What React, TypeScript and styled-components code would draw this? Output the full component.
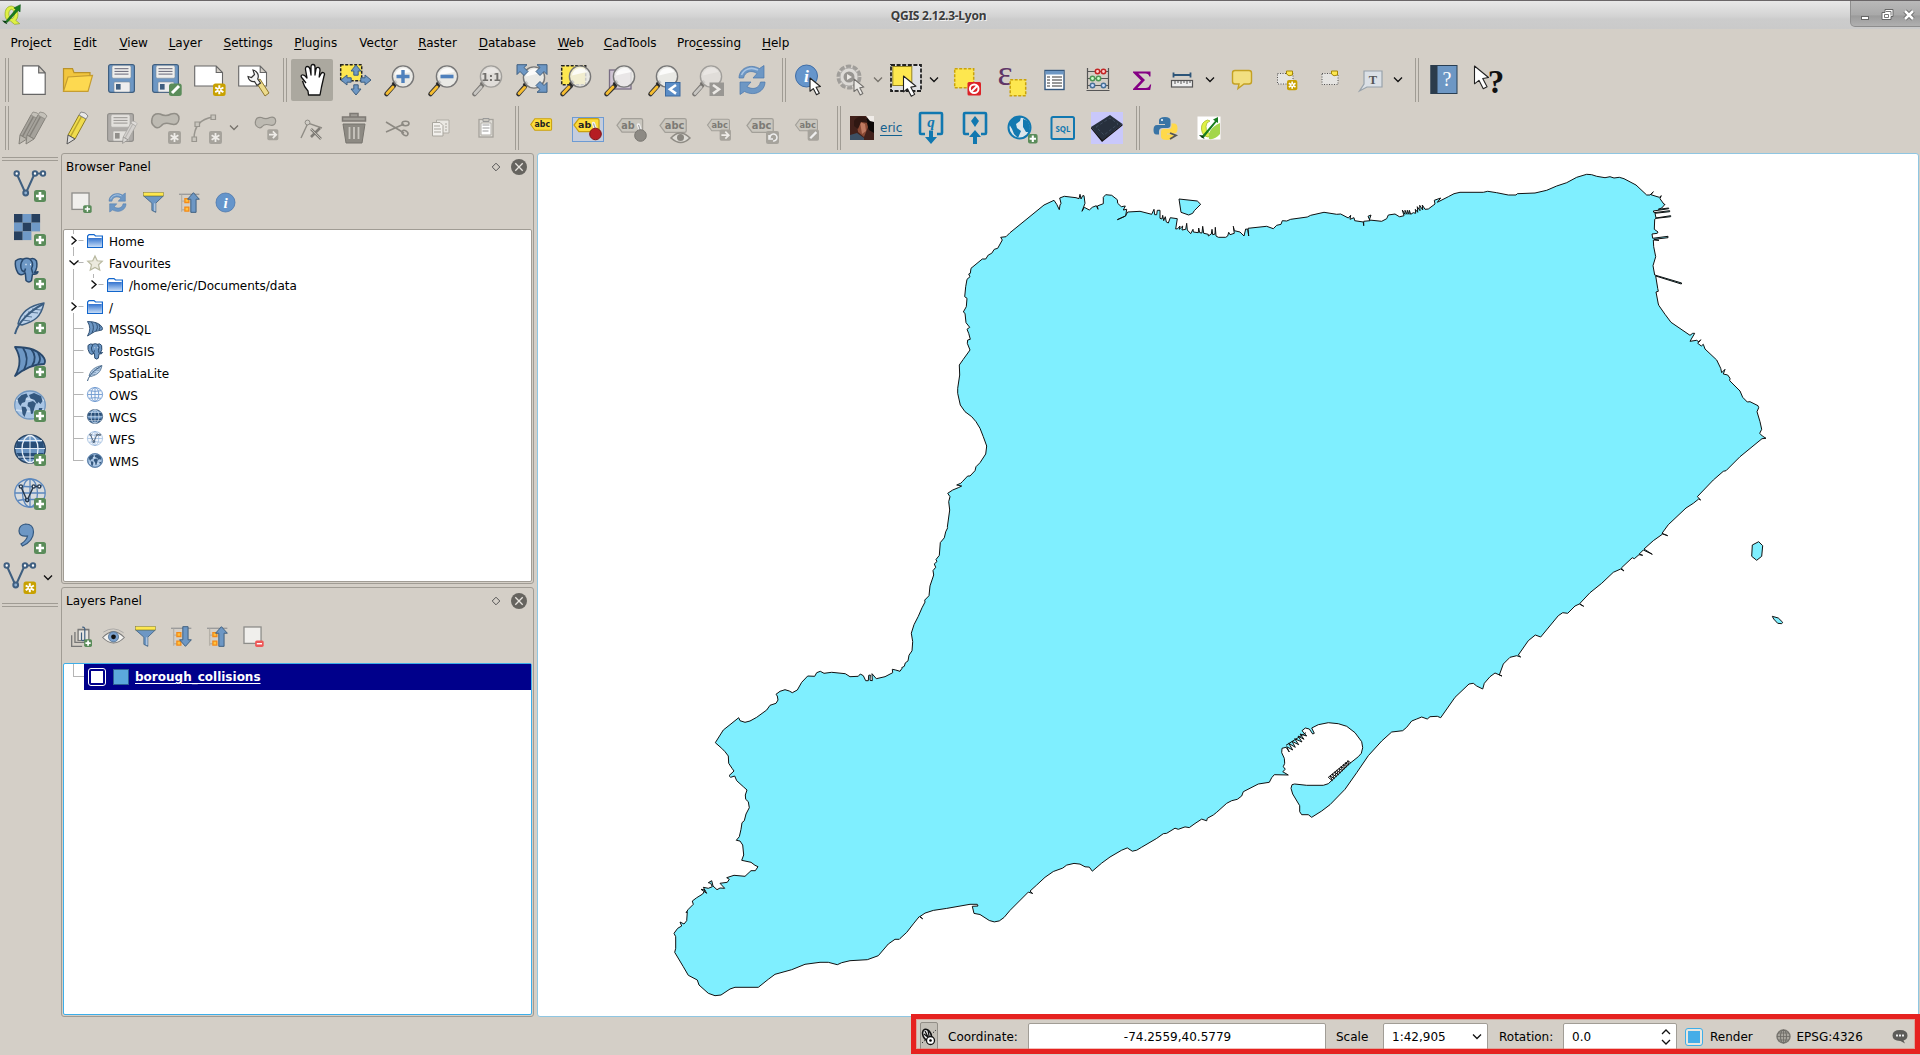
import React from "react";
import styled, { createGlobalStyle } from "styled-components";

const c = {
  bg: "#d4cfc7",
  line: "#a09c94",
  blue: "#6d97c4",
  navy: "#3f5f80",
  yellow: "#fde74f",
  gold: "#c9a20b",
  green: "#5a8c5a",
  highlight: "#3daee9",
  teal: "#1178b0",
};

const Global = createGlobalStyle`
  html, body { margin: 0; padding: 0; }
  body { background: ${c.bg}; overflow: hidden; }
  * { box-sizing: border-box; }
`;

/* ---------- layout ---------- */
const Window = styled.div`
  display: flex; flex-direction: column; width: 1920px; height: 1055px;
  background: ${c.bg}; color: #000; overflow: hidden;
  font: 12px "DejaVu Sans", sans-serif; position: relative;
`;
const TitleBar = styled.header`
  height: 29px; flex: none; display: flex; justify-content: space-between; border-top: 1px solid #6a6668;
  background: linear-gradient(#e8e8e8, #d3d3d3 55%, #cccccc 65%, #cacaca);
`;
const TitleLogo = styled.div`width: 70px; padding: 3px 0 0 2px;`;
const TitleText = styled.h1`
  margin: 0; padding-right: 43px; font: bold 12px/29px "Noto Sans", sans-serif; letter-spacing: -0.25px;
  color: #3c3c3c; text-shadow: 1px 1px 0 #f2f2f2;
`;
const WindowButtons = styled.div`
  width: 70px; height: 26px; display: flex; align-items: center; border-bottom-left-radius: 5px;
  background: linear-gradient(#b9b9b9, #a9a9a9 55%, #9b9b9b 60%, #b0b0b0);
  border-left: 1px solid #8f8f8f; border-bottom: 1px solid #8d8d8d;
`;
const MenuBar = styled.nav`
  height: 28px; flex: none; display: flex; padding-left: 10.4px; line-height: 28px;
  u { text-underline-offset: 2px; }
`;
const MenuItem = styled.span<{ $w: number }>`width: ${p => p.$w}px; flex: none; white-space: nowrap;`;
const ToolRow = styled.div`
  height: 48px; flex: none; display: flex; align-items: center; padding: 0 0 2px 5px;
`;
const Handle = styled.div<{ $gap?: number; $w?: number }>`
  flex: none; width: ${p => p.$w ?? 7}px; height: 44px; margin-left: ${p => p.$gap ?? 0}px;
  background: linear-gradient(90deg, ${c.line} 0 1px, transparent 1px 3px, ${c.line} 3px 4px, transparent 4px);
`;
const Cell = styled.div<{ $w?: number }>`
  flex: none; width: ${p => p.$w ?? 44}px; height: 42px; display: flex; align-items: center; justify-content: center;
`;
const Pressed = styled.div`
  width: 42px; height: 42px; border-radius: 2px; background: #aba89f; display: flex; align-items: center; justify-content: center;
`;
const UserLink = styled.a`
  width: 29px; height: 20px; color: #13618f; line-height: 20px; text-decoration: underline; text-underline-offset: 3px;
`;
const Body = styled.div`flex: none; height: 864px; display: flex;`;
const SideBar = styled.aside`width: 61px; flex: none; padding: 4px 0 0 2px; display: flex; flex-direction: column;`;
const SideHandle = styled.div`
  width: 56px; height: 4px; flex: none; border: solid ${c.line}; border-width: 1px 0;
`;
const SideCells = styled.div`padding: 3px 0 7px; display: flex; flex-direction: column;`;
const SideCell = styled.div<{ $last?: boolean }>`
  height: ${p => (p.$last ? 36 : 44)}px; width: 56px; display: flex; align-items: center; gap: 7px;
  padding-left: ${p => (p.$last ? 2 : 12)}px;
`;
const Docks = styled.div`width: 473px; flex: none; display: flex; flex-direction: column; gap: 3px;`;
const Dock = styled.section<{ $h: number }>`
  height: ${p => p.$h}px; flex: none; display: flex; flex-direction: column; padding: 0 1px 1px;
  border: 1px solid ${c.line}; border-radius: 3px;
`;
const DockHead = styled.div`
  height: 25px; flex: none; display: flex; align-items: center; gap: 10px; padding: 0 5px 0 3px; line-height: 24px;
  span { flex: 1; }
`;
const DockTools = styled.div`height: 50px; flex: none; display: flex; align-items: center; padding: 0 0 3px 0;`;
const List = styled.div<{ $active?: boolean }>`
  flex: 1; background: #fff; border: 1px solid ${p => (p.$active ? c.highlight : c.line)}; border-radius: 2px;
`;
const TreeRow = styled.div`height: 22px; display: flex; align-items: center; line-height: 22px;`;
const NodeText = styled.span`padding-top: 1px;`;
const Branch = styled.svg`flex: none; display: block;`;
const NodeIcon = styled.div`width: 22px; height: 16px; flex: none; svg { display: block; }`;
const LayerRow = styled.div`display: flex; height: 26px;`;
const LayerStem = styled.div`width: 11px; height: 13px; margin-left: 9px; border: solid #b5b5b5; border-width: 0 0 1px 1px;`;
const LayerItem = styled.div`
  flex: 1; background: #00008b; color: #fff; font-weight: bold; display: flex; align-items: center; padding-left: 4px;
  line-height: 26px; u { text-underline-offset: 2px; }
`;
const LayerCheck = styled.div`
  width: 18px; height: 18px; border: 1px solid #fff; border-radius: 3px; padding: 2px; margin-right: 7px;
  &::after { content: ""; display: block; height: 12px; background: #fff; }
`;
const Swatch = styled.div`width: 16px; height: 16px; background: #5ba8dc; border: 1px solid #2d5f93; margin-right: 6px;`;
const Canvas = styled.main`
  flex: none; width: 1382px; margin-left: 3px; background: #fff; border: 1px solid #8fc6e2; border-radius: 3px;
  svg { display: block; }
`;
const StatusBar = styled.footer`
  height: 38px; flex: none; display: flex; align-items: center; padding: 1px 0 0 920px;
`;
const ExtentToggle = styled.div`
  width: 18px; height: 29px; border: 1px solid #928e87; border-radius: 2px; background: #c4c0b8; margin-right: 10px;
  display: flex; align-items: center; justify-content: center;
`;
const Label = styled.span<{ $w: number; $ml?: number }>`
  width: ${p => p.$w}px; margin-left: ${p => p.$ml ?? 0}px; flex: none; white-space: nowrap;
`;
const Field = styled.div<{ $w: number; $mr: number; $center?: boolean }>`
  width: ${p => p.$w}px; height: 28px; flex: none; margin-right: ${p => p.$mr}px; background: #fff;
  border: 1px solid #a19d96; border-radius: 2px; display: flex; align-items: center;
  justify-content: ${p => (p.$center ? "center" : "space-between")}; padding: 0 5px 0 ${p => (p.$center ? 6 : 8)}px;
`;
const RenderCheck = styled.div`
  width: 18px; height: 18px; border: 1px solid ${c.highlight}; border-radius: 3px; padding: 2px; background: #e9e6df; margin-right: 7px;
  &::after { content: ""; display: block; height: 12px; background: #45ade8; }
`;
const Annotation = styled.div`
  position: absolute; left: 911px; top: 1014px; width: 1009px; height: 40px; border: 5px solid #e62220;
  box-shadow: inset 0 0 0 1px rgba(230, 110, 100, 0.45);
`;

/* ---------- icon pieces ---------- */
const Glyph = styled.svg<{ $off?: boolean }>`
  overflow: visible; flex: none;
  filter: ${p => (p.$off ? "grayscale(1)" : "none")};
  opacity: ${p => (p.$off ? 0.55 : 1)};
`;
type Kids = { children?: React.ReactNode };
const I = ({ children, s = 32, off }: Kids & { s?: number; off?: boolean }) => (
  <Glyph width={s} height={s} viewBox="0 0 32 32" $off={off}>{children}</Glyph>
);
const Chevron = ({ faded }: { faded?: boolean }) => (
  <svg width="10" height="8" viewBox="0 0 10 8"><path d="M1 1.5l4 4 4-4" fill="none" stroke={faded ? "#77736c" : "#111"} strokeWidth="1.3" /></svg>
);
const T = ({ x, y, s, f = "#222", children, w = "bold", ff = "DejaVu Sans" }: any) => (
  <text x={x} y={y} fontSize={s} fill={f} stroke="none" fontWeight={w} fontFamily={`"${ff}", sans-serif`} textAnchor="middle">{children}</text>
);
const PlusBadge = () => (
  <g><rect x="20" y="20" width="12" height="12" rx="2.5" fill={c.green} /><path d="M26 22v8M22 26h8" stroke="#fff" strokeWidth="2.6" /></g>
);
const StarBadge = ({ x = 19, y = 19.5 }) => (
  <g transform={`translate(${x} ${y})`}>
    <rect width="12.6" height="12.6" rx="2.5" fill="#c8a100" />
    <path d="M6.3 1.8v9M2.2 4l8.2 4.6M10.4 4L2.2 8.6" stroke="#fff" strokeWidth="2" />
    <circle cx="6.3" cy="6.3" r="1" fill="#c8a100" />
  </g>
);
const Cursor = ({ x, y, k = 1 }: any) => (
  <path transform={`translate(${x} ${y}) scale(${k})`} d="M0 0v13.2l3.3-2.6 3.2 6.2 2.8-1.5-3.2-6 4.3-.8z" fill="#fff" stroke="#222" strokeWidth={1.1 / k} strokeLinejoin="round" />
);
const Lens = ({ x = 19, y = 12.5 }) => (
  <g>
    <path d={`M${x - 9} ${y + 9}L2.5 30`} stroke="#333" strokeWidth="4.6" strokeLinecap="round" />
    <path d="M9 23L3 29.5" stroke="#f6bd30" strokeWidth="2.8" strokeLinecap="round" />
    <path d={`M${x - 10} ${y + 8}l3.4-3.4`} stroke="#222" strokeWidth="3.5" />
    <circle cx={x} cy={y} r="10.6" fill="#eeeeec" fillOpacity=".82" stroke="#777" strokeWidth="1.4" />
    <path d={`M${x - 8} ${y - 1}a8.5 8.5 0 0 1 15.6-3.5q-7 1-15.6 3.5z`} fill="#fff" opacity=".8" />
  </g>
);
const Page = () => <path d="M.7 2h21.5l6.3 6.5V22H.7zM22.2 2v6.5h6.3" fill="#fff" stroke="#666" strokeWidth="1.1" />;
const Floppy = () => (
  <g>
    <rect x="2.6" y=".7" width="25.8" height="27.6" rx="2" fill={c.blue} stroke={c.navy} strokeWidth="1.2" />
    <rect x="6" y="1.6" width="19" height="12.6" rx="1.5" fill="#eeeeec" stroke="#7c8a98" strokeWidth=".6" />
    <path d="M8.5 4.7h14M8.5 7.4h14M8.5 10.1h14" stroke="#667" />
    <rect x="8" y="18" width="16" height="10" rx="1" fill="#eee" stroke="#7c8a98" strokeWidth=".6" />
    <rect x="10" y="20" width="4.6" height="5.6" fill={c.navy} />
  </g>
);
const ArrowUp = ({ t }: { t: string }) => <path transform={t} d="M0-15l5 6H2.2v4.2h-4.4V-9H-5z" fill={c.blue} stroke={c.navy} strokeWidth="1" strokeLinejoin="round" />;
const Sync = () => (
  <g fill={c.blue} stroke="#4876ac" strokeWidth=".7">
    <path d="M3 14C3 5 13-1 23.500 4.500L28 1.500 28 14H17l4-4.500C16 6 9 7 7.500 14z" />
    <path d="M29 18c0 9-10 15-20.500 9.500L4 30.500 4 18h11l-4 4.500C16 26 23 25 24.500 18z" />
    <path d="M5.500 11C8 5 15 2.500 22 6" fill="none" stroke="#a9c5e4" strokeWidth="1.500" />
  </g>
);
const VLine = ({ k = c.navy, t }: { k?: string; t?: string }) => (
  <g transform={t} fill="none" stroke={k} strokeWidth="2">
    <path d="M3.500 5.500l7 15.500M12.800 21l7-15.500M23.500 3.600h3.500" />
    <circle cx="2.700" cy="3.500" r="2.200" fill="#fff" /><circle cx="21" cy="3.500" r="2.200" fill="#fff" />
    <circle cx="29" cy="3.500" r="2.200" fill="#fff" /><circle cx="11.700" cy="23" r="2.400" fill="#8fb0d2" />
  </g>
);
const Graticule = ({ k, f, w = 1.300 }: { k: string; f: string; w?: number }) => (
  <g fill="none" stroke={k} strokeWidth={w}>
    <ellipse cx="16" cy="15" rx="15.200" ry="14" fill={f} />
    <ellipse cx="16" cy="15" rx="7.500" ry="14" /><path d="M16 1v28M1 15h30M4 7.500q12 2.500 24 0M4 22.500q12-2.500 24 0" />
  </g>
);
const GlobeLayer = () => (
  <g>
    <ellipse cx="16" cy="15" rx="15.300" ry="14" fill="#a9c5e4" stroke="#7197c0" strokeWidth="1.300" />
    <path d="M2 10.500q14-3 28 0M2 20q14 3 28 0" stroke="#cfe0f2" strokeWidth="1.500" fill="none" />
    <path fill="#34587f" d="M3.500 9l4-4 5-1.500 1.500 3-2 1.500-1 4-3 1-1.500 3-2-3zM7.500 16.500l4 .5 1.500 3-2.500 7-2-3zM14 12.500l5-1.500 3 2.500-1.500 4-1.500 6-2 .5-1-6-2.500-2zM15 5l5-2 7 3 1.500 5-2 3-2-2-1.500 2-2.500-4-4-1.500zM25 18l3.500 0-1.500 4-2.500-1.500z" />
  </g>
);
const GlobeDark = () => (
  <g><ellipse cx="16" cy="15" rx="15.200" ry="14" fill={c.blue} stroke="#284565" strokeWidth="1.500" />
    <path d="M3 8h26l1 6H2zM2.500 19h27l-4 6h-19z" fill="#284e78" />
    <path d="M1 14.500h30M4 6.500h24M4 23h24" stroke="#dce8f4" /><ellipse cx="16" cy="15" rx="8" ry="13.500" fill="none" stroke="#e8f0f8" strokeWidth="1.300" /><path d="M16 1v28" stroke="#e8f0f8" /></g>
);
const Elephant = () => (
  <g fill={c.blue} stroke="#28486c" strokeWidth="1.500" strokeLinejoin="round">
    <path d="M1.500 3Q5-.5 9 1.200 13-.7 16 1.200 20-.8 22.500 3q1.500 7-2 11.500l3.500-.7q-1 3-5.500 2.200l-1 6.500q-2.500 3-5.500 0l-.7-7.500Q6.500 18.500 4 15 .5 9 1.500 3z" />
    <path d="M9 1.500q-4 5.500-1 11l2.500 1.500 1-3.500M16 1.500q4.500 3.500 1.500 9l1.200 4.500" fill="none" />
    <path d="M11.500 6.500h1M16 6.500h1" stroke="#fff" />
  </g>
);
const Feather = () => (
  <g stroke="#3b5d80" fill="#b9d0e9" strokeLinejoin="round">
    <path d="M30 1C18 3 7 9 4 22l4 1C21 19 27 15 30 1z" strokeWidth="1.400" /><path d="M1 32C4 20 16 9 29 2" fill="none" strokeWidth="2" /><path d="M10 14l8 1M8 18l8 1M14 10l10 1M18 7l9 1" fill="none" strokeWidth=".800" />
  </g>
);
const Sail = () => (
  <g fill={c.blue} stroke="#28486c" strokeWidth="1.800" strokeLinejoin="round">
    <path d="M1 1q22 0 29 11 2 4 0 6-14 0-29 12Q10 15 1 1z" /><path d="M9 2q7 10 1 22M17 3q7 8 1 17M24 7q4 6 0 11" fill="none" />
  </g>
);
const Funnel = () => (
  <g><path d="M1 6h30L19.500 17v14l-6-3V17z" fill={c.blue} stroke={c.navy} strokeWidth="1.200" /><path d="M18 17v12" stroke="#b9cde4" strokeWidth="2" /><rect x="1" y="1" width="30" height="5" fill={c.yellow} stroke="#888024" strokeWidth=".800" /></g>
);
const TreeArrow = ({ down }: { down?: boolean }) => (
  <g>
    <path d="M0 3.500h31" stroke="#999" strokeWidth="2" /><path d="M4 4v26M4 14h5M4 27h5" stroke="#b5b1a9" strokeWidth="2" fill="none" />
    <path d="M9 10h6v6H9zM9 23h6v6H9z" fill="#ffc23e" stroke="#f48a17" strokeWidth="2" />
    <path transform={down ? "rotate(180 22 16)" : ""} d="M22 1l9 10h-5v20h-8V11h-5z" fill={c.blue} stroke={c.navy} strokeWidth="1.500" />
  </g>
);
const InfoDisc = ({ x = 16, y = 16, r = 15 }) => (
  <g><circle cx={x} cy={y} r={r} fill="#6595cb" stroke="#3f6da6" /><text x={x} y={y + r * 0.56} textAnchor="middle" fill="#fff" fontSize={r * 1.6} fontStyle="italic" fontWeight="bold" fontFamily='"Liberation Serif", serif'>i</text></g>
);
const Square = ({ minus }: { minus?: boolean }) => (
  <g><rect x="1.500" y="1.500" width="26" height="25" fill="#f0efec" stroke="#8e8e8a" strokeWidth="2" />
    <rect x="18.500" y={minus ? 22 : 20} width="13" height={minus ? 10 : 12} rx="2.500" fill={minus ? "#ee5757" : c.green} /><path d={minus ? "M21 27h8" : "M25 22v8M21 26h8"} stroke="#fff" strokeWidth="2.200" /></g>
);
const Tag = ({ t = "abc", big, gray, tx = 17 }: { t?: string; big?: boolean; gray?: boolean; tx?: number }) => (
  <g transform={big ? "" : "translate(5.500 4.500) scale(.72)"}>
    <path d="M6 2.500h22.500q2 0 2 2v12q0 2-2 2H6L0 10.500z" fill={gray ? "#cac7bf" : "#fcdc3b"} stroke={gray ? "#a3a099" : "#caa110"} strokeWidth="1.500" />
    <T x={tx} y={14.5} s={11.5} f={gray ? "#7c7a75" : "#222"}>{t}</T>
  </g>
);
const Pin = ({ gray }: { gray?: boolean }) => <g><path d="M21.500 8l2 6" stroke="#eee" strokeWidth="3.500" strokeLinecap="round" /><path d="M21.500 8l2 6" stroke="#999" strokeWidth="1" /><circle cx="23.500" cy="18.500" r="5.800" fill={gray ? "#8d8a84" : "#b51d22"} stroke={gray ? "#77756f" : "#7d1115"} /></g>;
const Pencil = ({ x = 0, gray }: { x?: number; gray?: boolean }) => (
  <g transform={`translate(${x})`} strokeLinejoin="round">
    <path d="M17 3l7 4-11 20-7-4z" fill={gray ? "#a5a29b" : "#f0dc4d"} stroke={gray ? "#85827b" : "#8f7e20"} /><path d="M19.500 4.500l-11 20" stroke={gray ? "#85827b" : "#bba62d"} strokeWidth="1.500" />
    <path d="M17 3l2-3q5 0 7 4l-2 3z" fill={gray ? "#c4c1b9" : "#e8e8e8"} stroke={gray ? "#99968f" : "#888"} /><path d="M6 23l7 4-8 5z" fill={gray ? "#bab7af" : "#ddd"} stroke={gray ? "#85827b" : "#555"} />
  </g>
);
const Blob = () => <path d="M2 7Q3 1 10 2q6 3 11 0 8-2 8 5-1 7-8 5-7-2-10 2-4 4-8-1Q1 11 2 7z" fill="#bdbab2" stroke="#918e87" strokeWidth="1.500" />;
const GrayBadge = ({ children }: Kids) => <g><rect x="18" y="19" width="13" height="13" rx="2" fill="#a6a39c" />{children}</g>;
const GStar = () => <GrayBadge><path d="M24.500 21v9M20.600 23.200l7.800 4.600M28.400 23.200l-7.800 4.600" stroke="#eeece8" strokeWidth="1.800" /></GrayBadge>;
const GArrow = () => <GrayBadge><path d="M20 25.500h8m-3.500-4l4 4-4 4" stroke="#eeece8" strokeWidth="2" fill="none" /></GrayBadge>;
const LogoQ = () => (
  <g>
    <path d="M14 3C5 4 4 13 5 19c1 5 4 7 8 7l6 5 8-1-6-5c6-6 4-21-7-22zm0 5c6 1 6 11 2 14-6 1-8-11-2-14z" fill="#dff044" stroke="#8ba31e" fillRule="evenodd" />
    <path d="M5.500 26.500L21 8l-3-2 10-5-.500 11-3-2L8 28z" fill="#187d1f" stroke="#0b5213" strokeWidth=".800" /><path d="M0 25l6 1 2 5-4-2z" fill="#0b3f13" />
  </g>
);
const ZoomCorner = () => (
  <g fill={c.blue} stroke={c.navy}>
    {["", "translate(32 0) scale(-1 1)", "translate(32 29) scale(-1 -1)"].map((t, i) => <path key={i} transform={t} d="M1 .700h10L8 3.500l4 4L8 11.500l-4-4L1 10.500z" />)}
  </g>
);
const Frame = ({ up, children }: Kids & { up?: boolean }) => (
  <g fill="none" stroke={c.teal} strokeWidth="2.600">
    <path d="M10 22H6q-1 0-1-1V2q0-1 1-1h20q1 0 1 1v19q0 1-1 1h-4" />
    <path d={up ? "M14 32v-7h-4l6-7 6 7h-4v7z" : "M14 18.500v6.500h-4l6 7 6-7h-4v-6.500z"} fill={c.teal} stroke="none" />{children}
  </g>
);

/* ---------- toolbars ---------- */
type Item = { w?: number; h?: number; hw?: number; v?: React.ReactNode };
const DashY = ({ x = 0, y = 0, w = 20, h = 19, k = "#c9a20b" }) => <rect x={x + .7} y={y + .7} width={w} height={h} fill={c.yellow} stroke={k} strokeWidth="1.500" strokeDasharray="3 1.500" />;

const fileTools: Item[] = [
  { h: 0 },
  { v: <I><path d="M4.700 1.800h16l6.500 7v21.500H4.700zM20.700 1.800v7h6.500" fill="#fff" stroke="#666" strokeWidth="1.200" /></I> },
  { v: <I><path d="M1.500 27V4.700h9l1.500 4h16v5" fill="#f2c63e" stroke="#b9922a" strokeWidth="1.200" /><path d="M1.500 27.300L6 13l24.500-1.500L26 27.300z" fill="#fdd950" stroke="#c59d31" strokeWidth="1.200" /></I> },
  { v: <I><Floppy /></I> },
  { v: <I><Floppy /><rect x="19" y="19.500" width="12.700" height="12.500" rx="2.500" fill={c.green} /><path d="M22 29l7-7" stroke="#fff" strokeWidth="3" /></I> },
  { v: <I><Page /><StarBadge /></I> },
  { v: <I><Page /><path d="M18 18l4-3 9 14-4 3z" fill="#eddb8b" stroke="#8d7830" /><path d="M10 12.500a5.500 5.500 0 0 0 6.500 5l2.500 4 3.500-2.500-2.800-4a6.500 6.500 0 0 0-4.700-9l1.500 4.500-3 3z" fill="#f5f5f5" stroke="#333" strokeWidth="1.200" /></I> },
  { h: 7 },
  { v: <Pressed><I><path d="M10 19L6.500 14.500Q4 12 6 11t5 3L9.500 5.500Q9.300 2.500 11.300 2.500T14 5l1 6V3q0-2.500 2-2.500T19 3v8l1-6q.5-2 2.300-1.600T24 6l-.8 7 2-3.500q1-1.500 2.500-.7T28 12l-2.500 11-1.500 8H12.500l-.500-4Q8 23 6.500 17" fill="#fff" stroke="#111" strokeWidth="1.300" strokeLinejoin="round" /></I></Pressed> },
  { v: <I><DashY w={21} h={16} k="#222" />{[0, 90, 180, 270].map(a => <ArrowUp key={a} t={`translate(16 16) rotate(${a})`} />)}</I> },
  { v: <I><Lens /><path d="M19 6v13M12.500 12.500h13" stroke="#4f81bd" strokeWidth="3.400" /></I> },
  { v: <I><Lens /><path d="M12.500 12.500h13" stroke="#4f81bd" strokeWidth="3.600" /></I> },
  { v: <I off><Lens /><T x={19} y={17} s={11}>1:1</T></I> },
  { v: <I><Lens x={18} y={13.5} /><ZoomCorner /></I> },
  { v: <I><DashY x={1} y={1} w={24} h={19} k="#222" /><Lens x={20} y={12.5} /></I> },
  { v: <I><rect x="5.500" y="6" width="21.500" height="19" fill="#cfc4d3" stroke="#796d84" strokeWidth="1.300" /><Lens x={20} /></I> },
  { v: <I><Lens /><rect x="17.500" y="18.500" width="14.500" height="13.500" fill="#5b8dc6" stroke="#3c6aa0" /><path d="M28 21l-6 4.300 6 4.300" stroke="#fff" strokeWidth="2.600" fill="none" /></I> },
  { v: <I off><Lens /><rect x="17.500" y="18.500" width="14.500" height="13.500" fill="#6a6a66" /><path d="M21 21l6 4.300-6 4.300" stroke="#fff" strokeWidth="2.600" fill="none" /></I> },
  { v: <I><Sync /></I> },
  { h: 8, hw: 6 },
  { v: <I><InfoDisc x={12.5} y={12} r={11} /><Cursor x={16} y={14} /></I> },
  { w: 36, v: <I off><circle cx="15" cy="13" r="10.500" fill="#ddd" stroke="#777" strokeWidth="4" strokeDasharray="5 1.600" /><circle cx="15" cy="13" r="9" fill="#e4e4e4" stroke="#999" /><circle cx="15" cy="13" r="5.500" fill="#666" /><path d="M13 10l5 3-5 3z" fill="#fff" /><Cursor x={20} y={15} k={0.95} /></I> },
  { w: 20, v: <Chevron faded /> },
  { w: 36, v: <I><rect x="1" y="1" width="30" height="26" fill="#dfe0e3" stroke="#222" strokeWidth="1.800" strokeDasharray="4 1.600" /><rect x="2.800" y="2.500" width="19" height="19" fill={c.yellow} stroke="#958421" /><Cursor x={13.5} y={12} k={1.2} /></I> },
  { w: 20, v: <Chevron /> },
  { w: 46, v: <I><DashY x={3} y={4} w={19} h={19} /><rect x="16.500" y="18" width="13.500" height="13.500" rx="1.500" fill="#dc2328" /><circle cx="23.200" cy="24.700" r="4.300" fill="none" stroke="#fff" strokeWidth="2" /><path d="M20.500 27.500l5.500-5.500" stroke="#fff" strokeWidth="2" /></I> },
  { w: 43, v: <I><T x={9} y={20.5} s={36} f="#5f3667" w="normal" ff="Liberation Serif">ε</T><DashY x={13.5} y={15} w={15.5} h={16} /></I> },
  { w: 43, v: <I><rect x="6" y="6.500" width="19" height="19" fill="#fff" stroke="#34587f" strokeWidth="1.400" /><rect x="6.500" y="7" width="18" height="3.500" fill={c.blue} /><path d="M8 13h3m2 0h10M8 16h3m2 0h10M8 19h3m2 0h10M8 22h3m2 0h10" stroke="#333" /></I> },
  { v: <I><path d="M5.500 4v21M26.500 4v21M5 7.500h22M5 14.500h22M5 21.500h22M4.500 26.500h23" stroke="#555" strokeWidth="1.200" fill="none" /><g strokeWidth="1.500"><circle cx="15.500" cy="7.500" r="2.200" fill="#fcc" stroke="#c32424" /><circle cx="21.500" cy="7.500" r="2.200" fill="#fcc" stroke="#c32424" /><circle cx="10.500" cy="14.500" r="2.200" fill="#cfc" stroke="#4d9653" /><circle cx="16.500" cy="14.500" r="2.200" fill="#cfc" stroke="#4d9653" /><circle cx="10.500" cy="21.500" r="2.200" fill="#cdf" stroke="#477198" /><circle cx="21.500" cy="21.500" r="2.200" fill="#cdf" stroke="#477198" /></g></I> },
  { v: <I><path d="M7 7.500h17.500v5h-1.200q-.500-3-4-3h-7L19 16l-7.500 8h8q3.500 0 4.500-3.500h1.200L24.200 26H7v-1l8-8.500-8-8z" fill="#840084" /></I> },
  { w: 36, v: <I><path d="M7.500 11h17M7.500 8.500v5M24.500 8.500v5" stroke="#2d5578" strokeWidth="1.800" /><rect x="5.500" y="16.500" width="21" height="6.500" fill="#eee" stroke="#555" strokeWidth="1.200" /><path d="M9 17v3M12 17v2M15 17v3M18 17v2M21 17v3M24 17v2" stroke="#555" /></I> },
  { w: 20, v: <Chevron /> },
  { v: <I><path d="M9 6.500h14q2.500 0 2.500 2.500v8.500q0 2.500-2.500 2.500h-5l-6 4.500 1-4.500H9q-2.500 0-2.500-2.500V9q0-2.500 2.500-2.500z" fill="#f2df81" stroke="#c4a123" strokeWidth="1.400" /></I> },
  { w: 45, v: <I><rect x="6.500" y="9.500" width="15.500" height="10.500" fill="#e5e4e1" stroke="#555" strokeDasharray="1 1.500" /><path d="M15.500 7h6v4q-4 2-6-1z" fill={c.yellow} stroke="#a58707" /><g transform="translate(16 16) scale(.82)"><StarBadge x={0} y={0} /></g></I> },
  { w: 42, v: <I><rect x="8" y="9.500" width="16" height="11" fill="#e5e4e1" stroke="#555" strokeDasharray="1 1.500" /><path d="M17.500 7h6v4q-4 2-6-1z" fill={c.yellow} stroke="#a58707" /></I> },
  { w: 40, v: <I><path d="M9 7h18v16H12l-7.500 4L9 20z" fill="#dbe0e6" stroke="#98a2ab" strokeWidth="1.200" /><T x={18} y={19.500} s={12.500} f="#555" ff="Liberation Serif">T</T></I> },
  { w: 14, v: <Chevron /> },
  { h: 10 },
  { w: 43, v: <I><rect x="3" y="1.500" width="26" height="28" fill={c.blue} stroke="#283e53" /><rect x="2.500" y="1" width="7" height="29" fill="#2b3c4c" /><T x={19} y={22} s={20} f="#fff" w="normal" ff="Liberation Serif">?</T></I> },
  { w: 46, v: <I><Cursor x={2.5} y={2} k={1.35} /><T x={24} y={29} s={33} f="#111" ff="Liberation Serif">?</T></I> },
];

const editTools: Item[] = [
  { h: 0 },
  { v: <I><Pencil x={-4} gray /><Pencil x={3} gray /></I> },
  { v: <I><Pencil /></I> },
  { v: <I off><g transform="translate(-1 1)"><Floppy /></g><g transform="translate(13 9) scale(.7)"><Pencil /></g></I> },
  { v: <I><Blob /><GStar /></I> },
  { w: 38, v: <I><path d="M3 27Q3 8 22 5" fill="none" stroke="#98958e" strokeWidth="1.500" /><path d="M1 25h4.500v4.500H1zM4 10h4.500v4.500H4zM20 3h4.500v4.500H20z" fill="#c9c6be" stroke="#98958e" strokeWidth="1.200" /><GStar /></I> },
  { w: 16, v: <Chevron faded /> },
  { w: 48, v: <I><g transform="translate(4 4) scale(.75)"><Blob /></g><g transform="translate(2 1) scale(.85)"><GArrow /></g></I> },
  { w: 42, v: <I><path d="M6 26l7-15 14 5" fill="none" stroke="#8f8c85" strokeWidth="1.400" /><circle cx="12.500" cy="10.500" r="2.400" fill="#cfccc5" stroke="#8f8c85" /><path d="M16 17l10 10M25 16l-9 9" stroke="#7f7c76" strokeWidth="2.600" /><path d="M16 17l10 10" stroke="#c0bdb5" strokeWidth="1" /></I> },
  { w: 43, v: <I><path d="M5 12h22l-3 19H8z" fill="#8d8a83" stroke="#77746e" /><path d="M11.500 15v12M16 15v12M20.500 15v12" stroke="#c9c6bf" strokeWidth="1.800" /><path d="M4.500 5h23v4h-23zM12 5V1.500h8V5" fill="#a09d96" stroke="#7d7a74" strokeWidth="1.500" /></I> },
  { w: 46, v: <I><path d="M4 10l18 11M4 20l18-8" stroke="#8c8982" strokeWidth="1.500" /><ellipse cx="23.500" cy="11.500" rx="3.500" ry="2.200" fill="none" stroke="#8c8982" strokeWidth="1.600" /><ellipse cx="23" cy="21" rx="3.200" ry="2.200" transform="rotate(35 23 21)" fill="none" stroke="#8c8982" strokeWidth="1.600" /></I> },
  { w: 40, v: <I><path d="M11.500 8H24v13H11.500z" fill="#eae8e3" stroke="#b0ada5" /><path d="M7.500 10.500h7.500l3 3V24H7.500z" fill="#f2f0ec" stroke="#a9a69e" /><path d="M9 14h6M9 17h7M9 20h7M20 12h2M20 15h2M20 18h2" stroke="#a9a69e" /></I> },
  { w: 50, v: <I><rect x="9" y="7.500" width="14" height="17.500" fill="#dedcd6" stroke="#a5a29b" strokeWidth="1.300" /><path d="M11 11h10v12H11z" fill="#fff" stroke="#b0ada6" /><path d="M13 6.500h6v3h-6z" fill="#c9c6be" stroke="#999" /><path d="M12.500 13h7M12.500 16h7M12.500 19h6" stroke="#999" /></I> },
  { h: 4, hw: 6 },
  { v: <I><g transform="translate(-1.500 .500) scale(.95 1)"><Tag /></g></I> },
  { w: 46, v: <I><rect x=".500" y="5.500" width="31" height="24" fill="#c5cddd" stroke="#6d9bd3" /><g transform="translate(2 4.500) scale(.82)"><Tag big t="ab" tx={13} /></g><g transform="translate(0 3.500)"><Pin /></g></I> },
  { w: 42, v: <I><g transform="translate(1 4.500) scale(.84)"><Tag big gray t="ab" tx={13} /></g><g transform="translate(1 5)"><Pin gray /></g></I> },
  { w: 46, v: <I><g transform="translate(0 4.500) scale(.86)"><Tag big gray /></g><path d="M11 26q9-10 19 0-9 9-19 0z" fill="#dedcd6" stroke="#8f8c85" strokeWidth="1.500" /><circle cx="20.500" cy="25.500" r="3.500" fill="#8a8780" /></I> },
  { w: 42, v: <I><g transform="translate(-2 1)"><Tag gray /></g><g transform="translate(0 1) scale(.87)"><GArrow /></g></I> },
  { w: 46, v: <I><g transform="translate(-1 4.500) scale(.86)"><Tag big gray /></g><GrayBadge><path d="M21 23v4h4M22 26a3.500 3.500 0 1 1 3 3" stroke="#eee" strokeWidth="1.600" fill="none" /></GrayBadge></I> },
  { w: 42, v: <I><g transform="translate(-2 1)"><Tag gray /></g><g transform="translate(0 1) scale(.87)"><GrayBadge><path d="M21 29l7-7" stroke="#eee" strokeWidth="2.600" /></GrayBadge></g></I> },
  { h: 8 },
  { w: 36, v: <svg width="24" height="24" viewBox="0 0 24 24"><rect width="24" height="24" fill="#e8dcd2" /><path d="M0 24V0h8l12 0 4 4v20z" fill="#42211b" /><path d="M14 4l8-4h2v17l-5-3z" fill="#0d0908" /><path d="M16 0h8v6l-4-1z" fill="#f0ece8" /><path d="M6 3q5-4 10 0l2 8-4 10-6-5z" fill="#8b4b36" /><path d="M10 6l5 2 1 7-4 3z" fill="#bf7a61" /><path d="M4 5Q7-1 15 1l3 6-7-1-3 7-4-3z" fill="#2f1712" /><path d="M0 19l7-2 7 5v2H0z" fill="#3c4f63" /></svg> },
  { w: -1 },
  { v: <I><Frame><text x="16" y="15" fontSize="15" fontStyle="italic" fontWeight="bold" fill={c.teal} stroke="none" textAnchor="middle" fontFamily='"Liberation Serif", serif'>q</text></Frame></I> },
  { w: 43, v: <I><Frame up><path d="M16 4l4 5-4 6-4-6z" fill={c.teal} stroke="none" /></Frame></I> },
  { w: 50, v: <I><circle cx="14.500" cy="15.500" r="11" fill="#dbe6ec" stroke={c.teal} strokeWidth="2" /><path fill={c.teal} d="M4 12l5-7 7 0-1 4-4 3 1 4 4 3-3 7-4-4-2-5zM18 7l5 2 2 6-1 5-3 0-3-5z" /><g transform="translate(7 6) scale(.8)"><PlusBadge /></g></I> },
  { w: 33, v: <I><rect x="4.500" y="5" width="22.500" height="22" rx="1.500" fill="none" stroke={c.teal} strokeWidth="2" /><text x="16" y="19.500" textAnchor="middle" fontSize="9.500" fontWeight="bold" fill={c.teal} fontFamily='"Open Sans", sans-serif' textLength="15" lengthAdjust="spacingAndGlyphs">SQL</text></I> },
  { w: 56, v: <I><rect width="32" height="32" fill="#c9c8fb" /><path d="M0 15L19 3l12.500 9-20 16.500z" fill="#27303d" /><path d="M0 15v1.500L11 30l20.500-16.500V12l-20 16z" fill="#111" /><path d="M5 15l14-9 8 6-14 11z" fill="none" stroke="#3d4a5b" strokeDasharray="3 2" /></I> },
  { h: 1 },
  { w: 45, v: <I><path d="M15 5q-6 0-6 3.500V12h6v1H7q-3.500 0-3.500 5 0 4.500 3 4.500H9v-3q0-3.500 3.500-3.500h5q3 0 3-3V8.500Q20.500 5 15 5z" fill="#3974a5" /><path d="M21.500 11.500H24q3.500 0 3.500 5t-3.500 5h-7v1h6v2.500q0 3-6 3t-6-3.500V20q0-3 3-3h5q2.500 0 2.500-3z" fill="#ffd94a" /><circle cx="12" cy="8" r="1" fill="#fff" /><path d="M20 21l6 2.500-6 3.500" fill="none" stroke="#555" strokeWidth="1.800" /></I> },
  { w: 42, v: <I><rect x="4.500" y="4.500" width="23" height="23" fill="#fff" /><path d="M14.500 8q-6.500 2-6 9 .5 7 6.500 8l4-3q-6 0-6-7.500Q13 10 17 9z" fill="#dff044" stroke="#a5bd2a" strokeWidth=".800" /><path d="M27 11v11q-5 6-11 5Q14 17 27 11z" fill="#a3d64a" /><path d="M9 24l13-15-2-1.500L25 5v6l-1.500-1L11 25.500z" fill="#187d1f" /><path d="M6 23l4 .5 1.500 3.500-3-1.500z" fill="#0b3f13" /></I> },
];

const Tools = ({ items }: { items: Item[] }) => (
  <ToolRow>
    {items.map((it, i) =>
      it.h !== undefined ? <Handle key={i} $gap={it.h} $w={it.hw} />
        : it.w === -1 ? <UserLink key={i}>eric</UserLink>
          : <Cell key={i} $w={it.w}>{it.v}</Cell>)}
  </ToolRow>
);

const sideTools = [
  <VLine />,
  <g>{[0, 1, 2].map(r => [0, 1, 2].map(k => r === 2 && k === 2 ? null : <rect key={`${r}${k}`} x={k * 8.7} y={r * 8.7} width="8.700" height="8.700" fill={(r + k) % 2 ? "#6f99c7" : "#27405f"} />))}</g>,
  <Elephant />,
  <Feather />,
  <Sail />,
  <GlobeLayer />,
  <GlobeDark />,
  <g><Graticule k="#5b87bd" f="#d8dcdf" /><VLine k="#26394e" t="translate(5 6) scale(.7)" /></g>,
  <path d="M5 9q0-6 6.500-7 8 0 8 8 0 9-11 14l-1.500-2q6-4 6.500-8Q5 15 5 9z" fill={c.blue} stroke="#34587f" strokeWidth="1.200" />,
];

/* ---------- browser tree ---------- */
const Folder = () => <svg width="16" height="16" viewBox="0 0 16 16"><defs><linearGradient id="fold" x2="0" y2="1"><stop offset="0" stopColor="#3273cf" /><stop offset="1" stopColor="#c2d9f5" /></linearGradient></defs><path d="M.600 14.400V3L2 1.600h5L8.500 3h6.900v11.400z" fill="#fff" stroke="#1266cc" strokeWidth="1.200" /><path d="M1.200 5h13.600v8.800H1.200z" fill="url(#fold)" /></svg>;
const nodes: { t: string; i: React.ReactNode; open?: boolean; fold?: boolean; child?: boolean }[] = [
  { t: "Home", i: <Folder />, fold: true },
  { t: "Favourites", i: <I s={16}><path d="M16 2l4.500 9.500 10 1-7.500 7 2.500 10.500L16 25l-9.500 5L9 19.500l-7.500-7 10-1z" fill="#eceade" stroke="#b9b9a0" strokeWidth="2.400" /></I>, open: true },
  { t: "/home/eric/Documents/data", i: <Folder />, fold: true, child: true },
  { t: "/", i: <Folder />, fold: true },
  { t: "MSSQL", i: <I s={16}><Sail /></I> },
  { t: "PostGIS", i: <I s={16}><g transform="translate(0 1) scale(1.3)"><Elephant /></g></I> },
  { t: "SpatiaLite", i: <I s={16}><Feather /></I> },
  { t: "OWS", i: <I s={16}><Graticule k="#6f9ad0" f="#f5f8fc" w={1.800} /></I> },
  { t: "WCS", i: <I s={16}><GlobeDark /></I> },
  { t: "WFS", i: <I s={16}><Graticule k="#8eb0d8" f="#f5f8fc" /><VLine k="#26394e" t="translate(5 5) scale(.72)" /></I> },
  { t: "WMS", i: <I s={16}><GlobeLayer /><ellipse cx="16" cy="15" rx="14.500" ry="13.500" fill="none" stroke="#476d99" strokeWidth="1.800" /></I> },
];
const TreeBranch = ({ n, last }: { n: (typeof nodes)[number]; last: boolean }) => {
  const k = n.child ? 29.500 : 9.500;
  const marked = n.fold || n.open;
  return (
    <Branch width={n.child ? 43 : 23} height="22">
      <g stroke="#b5b5b5" fill="none">
        {n.child ? <path d="M9.500 0v22M29.500 0v4" /> : marked ? <path d="M9.500 0v4M9.500 17v5" /> : <path d={`M9.500 0v${last ? 11 : 22}`} />}
        <path d={`M${marked ? k + 5 : k} 10.500H${k + 10}`} />
      </g>
      {n.fold && <path d={`M${k - 2} 6.500l4.500 4-4.500 4`} fill="none" stroke="#111" strokeWidth="1.400" />}
      {n.open && <path d="M5.500 8.500l4.500 4 4.500-4" fill="none" stroke="#111" strokeWidth="1.400" />}
    </Branch>
  );
};
const HeadButtons = () => (
  <>
    <svg width="10" height="10" viewBox="0 0 10 10"><path d="M5 1.200L8.800 5 5 8.800 1.200 5z" fill="none" stroke="#555" /></svg>
    <svg width="16" height="16" viewBox="0 0 16 16"><circle cx="8" cy="8" r="8" fill="#66645f" /><path d="M4.300 4.300l7.400 7.400M11.700 4.300l-7.400 7.400" stroke="#e8e5df" strokeWidth="1.300" /></svg>
  </>
);

/* ---------- coastline ---------- */
const trace = (ox: number, oy: number, s: string, ky = 3) =>
  s.trim().split(/\s+/).map(p => { const [x, y] = p.split(",").map(Number); return `${(ox + x / 3).toFixed(1)},${(oy + y / ky).toFixed(1)}`; }).join(" ");

const coast = [
  trace(640, 640, "104,937 107,925 107,890 102,880 113,865 125,858 120,846 132,852 140,842 142,815 138,818 145,808 160,793 157,783 170,773 188,762 195,750 183,748 200,760 190,742 205,745 217,740 212,730 205,728 215,722 219,738 231,749 240,744 254,745 240,730 262,727 268,718 260,713 282,706 315,709 333,692 346,692 354,680 345,676 333,667 305,661 311,645 308,615 300,603 289,601 298,590 303,568 306,548 313,542 318,522 328,503 325,485 317,478 316,465 321,450 310,440 290,422 284,408 272,412 267,407 282,393 276,385 266,370 265,348 255,335 245,325 226,308 250,270 270,254 296,233 300,242 315,247 330,243 350,232 380,210 390,196 408,190 414,180 412,168 408,163 420,154 435,149 448,153 457,158 472,150 485,127 503,108 524,109 530,98 541,94 552,100 575,97 616,101 630,110 655,109 661,102 670,107 677,122 685,122 686,106 691,105 690,121 697,122 696,101 709,116 735,110 758,98 757,88 767,90 780,94 786,85"),
  trace(900, 525, "5,422 13,418 16,408 24,402 27,385 36,372 38,345 34,320 42,295 55,270 66,245 75,228 74,222 87,209 90,180 101,148 99,135 107,125 103,115 111,108 108,102 118,90 121,52 133,38 137,20 143,8", 2.958),
  trace(900, 150, "142,1132 145,1110 149,1080 146,1055 150,1040 143,1030 158,1020 175,1013 185,1008 170,1005 182,1000 187,995 203,978 210,978 225,962 228,950 240,938 257,912 260,888 250,860 240,835 228,815 215,800 195,785 181,765 173,730 173,715 179,675 178,645 190,628 210,600 202,580 203,570 211,568 206,550 201,538 209,532 198,518 195,490 190,486 199,470 201,445 194,440 197,410 201,388 210,380 206,372 211,370 213,355 247,327 257,327 265,315 275,310 283,298 293,295 307,270 302,262 318,260 330,248 432,165 462,151 470,163 478,179 480,165 483,160 479,144 493,139 528,143 537,146 540,133 543,147 548,137 552,137 555,160 546,184 553,172 568,180 577,172 589,167 594,178 592,168 610,161 610,142 617,134 635,136 652,149 653,160 664,170 676,168 670,180 680,178 677,198 652,209 676,198 683,186 720,184 755,193 762,178 764,194 770,194 772,181 780,181 780,205 786,207 788,196 791,212 796,200 799,216 805,219 811,203 832,206 827,237 833,236 840,228 838,238 848,228 846,240 857,238 860,220 862,240 872,251 879,238 880,246 895,248 896,234 899,248 906,249 908,229 911,250 925,253 925,258 934,252 936,238 938,254 945,252 946,232 948,258 955,262 977,262 983,258 986,247 990,254 1003,250 1000,229 1003,242 1020,246 1032,258 1037,237 1043,238 1046,258 1044,235 1100,229 1120,236 1130,226 1143,223 1147,212 1160,213 1172,208 1222,201 1232,196 1272,187 1310,193 1322,192 1345,204 1352,196 1350,208 1362,203 1364,212 1390,216 1391,227 1391,214 1410,212 1404,199 1413,195 1408,210 1445,214 1460,206 1465,195 1485,192 1498,200"),
  trace(1400, 150, "0,200 12,197 7,180 15,193 15,181 21,193 22,181 27,193 28,181 32,193 40,188 47,190 46,178 53,187 52,170 60,182 59,166 68,180 67,165 75,178 85,177 105,162 103,151 122,144 112,157 145,140 162,131 180,127 250,127 263,124 290,128 325,135 348,135 352,131 405,129 440,121 470,108 500,98 530,82 560,73 575,74 590,79 615,83 630,80 642,84 658,82 672,86 708,105 740,135 750,135 760,125 753,134 768,139 778,142 784,137 780,146 792,163 795,163 785,174 775,178 806,174 806,176 760,183 762,188 809,182 809,185 765,190 768,204 812,197 812,200 768,205 764,208 763,238 774,246 772,250 756,252 758,265 804,259 804,263 762,268 777,271 760,270 761,290 767,320 759,347 764,375 845,399 844,402 767,378 773,415 775,424 768,426 775,462 777,467 795,493 813,517 870,556 878,550 884,550 870,574 890,571 897,576 902,569 893,580 904,588 910,583 915,597 950,630 962,655 965,668 975,658 970,672 983,675 990,685 989,692 1020,723 1028,742 1042,756 1050,755 1074,767 1076,773 1071,785 1080,815 1085,838 1079,850 1087,858 1098,865 1086,866 1020,920 978,962 970,964 940,990 892,1040 902,1050 896,1047 880,1060 858,1074 805,1124 786,1150 803,1157 788,1152 760,1172 732,1197 757,1213 730,1200 718,1212 728,1216 717,1214 703,1226 697,1223 664,1254 672,1263 662,1257 640,1267 605,1300 570,1328 540,1360"),
  trace(1200, 600, "1140,12 1151,19 1138,12 1125,18 1103,40 1088,38 1075,47 1022,111 1006,105 985,122 955,165 962,171 950,167 930,172 910,192 898,225 906,228 885,219 870,230 853,250 848,267 830,258 820,250 807,252 765,292 722,353 712,349 690,350 682,357 665,351 650,357 635,363 620,382 608,392 575,396 545,423 505,467 470,518 435,568 390,614 365,633 335,652 325,644 305,644 299,635 299,617 278,582 273,565 276,554 284,552 320,556 370,556 385,551 450,490 475,470 484,460 488,443 485,425 465,398 440,379 415,371 385,368 355,374 335,384 343,400 338,402 328,387 316,384 306,392 320,408 300,402 312,418 294,408 306,426 284,416 296,434 276,424 286,442 266,430 278,450 260,440 268,456 258,442 246,445 245,458 253,475 254,490 250,500 256,508 248,515 265,525 223,524 215,533 208,547 175,552 130,575 125,588 112,598 95,602 80,610 50,637 40,645 22,655"),
  trace(900, 525, "920,875 905,870 885,883 868,895 855,893 835,900 825,897 800,912 790,913 770,927 725,953 710,962 697,965 682,955 665,962 630,982 605,1000 577,1024 568,1012 555,1011 540,1003 522,1001 500,1006 488,1015 460,1025 435,1042 410,1065 390,1083 398,1090 385,1086 330,1140 312,1161 298,1171 283,1174 268,1170 240,1152 222,1149 217,1128 234,1127 232,1122 210,1122 140,1134 100,1140 75,1148 60,1158 68,1165 58,1158 40,1180 20,1205 0,1223", 2.958),
  trace(640, 640, "778,898 765,898 745,912 715,947 682,959 630,962 605,968 592,974 565,967 540,967 495,973 455,989 405,1003 385,1018 355,1042 285,1042 270,1047 243,1065 225,1067 205,1060 177,1035 172,1020 145,1006 130,980"),
].join(" ");

const islands = [
  trace(900, 150, "837,147 892,153 902,163 883,182 878,190 866,195 843,187"),
  trace(1400, 150, "1057,1185 1076,1175 1088,1187 1085,1219 1070,1231 1055,1219"),
  trace(1400, 150, "1117,1399 1135,1404 1148,1417 1145,1421 1133,1420 1121,1407"),
];
const docks = [
  trace(1200, 600, "385,532 397,542 391,528 403,536 397,522 409,530 404,516 415,525 410,511 421,519 417,505 428,513 423,499 434,507 430,493 440,501 436,488 446,495 443,482 453,489"),
  trace(1200, 600, "385,532 445,483"),
  trace(1200, 600, "258,436 318,398"),
];

const BoroughMap = () => (
  <svg width="1380" height="862" viewBox="538 154 1380 862">
    <g fill="#7fefff" stroke="#111" strokeWidth="1" strokeLinejoin="round">
      <polygon points={coast} />
      {islands.map((p, i) => <polygon key={i} points={p} />)}
      {docks.map((p, i) => <polyline key={i} points={p} fill="none" />)}
    </g>
  </svg>
);

/* ---------- menu ---------- */
const menus: [string, string, string, number][] = [
  ["Pro", "j", "ect", 63.2], ["", "E", "dit", 45.8], ["", "V", "iew", 49.3], ["", "L", "ayer", 54.9],
  ["", "S", "ettings", 70.6], ["", "P", "lugins", 65.2], ["Vect", "o", "r", 58.8], ["", "R", "aster", 60.5],
  ["", "D", "atabase", 79], ["", "W", "eb", 46], ["", "C", "adTools", 73.3], ["Pro", "c", "essing", 85], ["", "H", "elp", 40],
];

export default function App() {
  return (
    <Window>
      <Global />
      <TitleBar>
        <TitleLogo><I s={21}><LogoQ /></I></TitleLogo>
        <TitleText>QGIS 2.12.3-Lyon</TitleText>
        <WindowButtons>
          <svg width="69" height="26" viewBox="0 0 69 26">
            <rect x="10.500" y="15.500" width="7" height="3" fill="#fff" stroke="#666" />
            <path d="M34 8.500h8v7h-2v3h-9v-7h3z" fill="#fff" stroke="#666" /><path d="M33.500 13.500h4v3h-4zM35 10.500h5v4" fill="none" stroke="#777" />
            <path d="M54 10l8 8M62 10l-8 8" stroke="#666" strokeWidth="4.500" /><path d="M54 10l8 8M62 10l-8 8" stroke="#fff" strokeWidth="2.500" />
          </svg>
        </WindowButtons>
      </TitleBar>
      <MenuBar>{menus.map(([a, b, d, w]) => <MenuItem key={a + b + d} $w={w}>{a}<u>{b}</u>{d}</MenuItem>)}</MenuBar>
      <Tools items={fileTools} />
      <Tools items={editTools} />
      <Body>
        <SideBar>
          <SideHandle />
          <SideCells>
            {sideTools.map((v, i) => <SideCell key={i}><I>{v}<PlusBadge /></I></SideCell>)}
            <SideCell $last><I><VLine /><StarBadge x={19.500} y={19.500} /></I><Chevron /></SideCell>
          </SideCells>
          <SideHandle />
        </SideBar>
        <Docks>
          <Dock $h={431}>
            <DockHead><span>Browser Panel</span><HeadButtons /></DockHead>
            <DockTools>
              {[<Square />, <Sync />, <Funnel />, <TreeArrow />, <InfoDisc r={14.500} />].map((v, i) => <Cell key={i} $w={36}><I s={21}>{v}</I></Cell>)}
            </DockTools>
            <List>
              {nodes.map((n, i) => (
                <TreeRow key={n.t}><TreeBranch n={n} last={i === nodes.length - 1} /><NodeIcon>{n.i}</NodeIcon><NodeText>{n.t}</NodeText></TreeRow>
              ))}
            </List>
          </Dock>
          <Dock $h={430}>
            <DockHead><span>Layers Panel</span><HeadButtons /></DockHead>
            <DockTools>
              <Cell $w={36}><I s={21}><path d="M1 14v17h16M6 9v16h15M11 5h16v17H11z" fill="none" stroke="#777" strokeWidth="2" /><rect x="11" y="6" width="16" height="16" fill="#e8e6e1" stroke="#777" strokeWidth="1.500" /><path d="M16 10v11q2 3 5 0V4q-1-3-4-2" fill="none" stroke={c.navy} strokeWidth="1.800" /><PlusBadge /></I></Cell>
              <Cell $w={29}><svg width="23" height="21" viewBox="0 0 34 31"><path d="M1 17Q17 0 33 17 17 33 1 17z" fill="#f2f1ee" stroke="#777" strokeWidth="1.500" /><path d="M2 9Q17-1 32 10" fill="none" stroke="#999" /><circle cx="17" cy="16" r="7.500" fill="#7ba0cc" stroke={c.navy} /><circle cx="17" cy="16" r="3.500" fill="#111" /></svg></Cell>
              <Cell $w={35}><I s={21}><Funnel /></I></Cell>
              <Cell $w={37}><I s={21}><TreeArrow down /></I></Cell>
              <Cell $w={35}><I s={21}><TreeArrow /></I></Cell>
              <Cell $w={36}><I s={21}><Square minus /></I></Cell>
            </DockTools>
            <List $active>
              <LayerRow><LayerStem /><LayerItem><LayerCheck /><Swatch /><u>borough_collisions</u></LayerItem></LayerRow>
            </List>
          </Dock>
        </Docks>
        <Canvas><BoroughMap /></Canvas>
      </Body>
      <StatusBar>
        <ExtentToggle>
          <svg width="16" height="18" viewBox="0 0 16 18"><path d="M1 15L15 2" stroke="#333" strokeDasharray="1.500 1.500" /><ellipse cx="6" cy="7" rx="4" ry="6" transform="rotate(-25 6 7)" fill="#eee" stroke="#111" strokeWidth="1.600" /><path d="M4 3l3 6M7 2l1 6M3 6l5 4" stroke="#111" strokeWidth="1.300" /><circle cx="9.500" cy="12.500" r="4" fill="#fff" stroke="#111" strokeWidth="1.300" /><circle cx="9.500" cy="12.500" r="1.300" /></svg>
        </ExtentToggle>
        <Label $w={80}>Coordinate:</Label>
        <Field $w={298} $mr={10} $center>-74.2559,40.5779</Field>
        <Label $w={47}>Scale</Label>
        <Field $w={105} $mr={11}>1:42,905<Chevron /></Field>
        <Label $w={64}>Rotation:</Label>
        <Field $w={114} $mr={8}>0.0<svg width="10" height="18" viewBox="0 0 10 18"><path d="M1 6l4-4 4 4M1 12l4 4 4-4" fill="none" stroke="#111" strokeWidth="1.300" /></svg></Field>
        <RenderCheck />
        <Label $w={66}>Render</Label>
        <svg width="15" height="15" viewBox="0 0 15 15"><circle cx="7.500" cy="7.500" r="6.500" fill="#aaa79f" stroke="#77756f" strokeWidth="1.400" /><ellipse cx="7.500" cy="7.500" rx="3" ry="6.500" fill="none" stroke="#6d6b66" /><path d="M1 7.500h13M7.500 1v13M2 4h11M2 11h11" stroke="#6d6b66" strokeWidth=".800" /></svg>
        <Label $w={95} $ml={5.5}>EPSG:4326</Label>
        <svg width="16" height="15" viewBox="0 0 16 15"><path d="M8 1q7.500 0 7.500 5.500 0 4-4 5l1.500 3-4.500-2.600Q.500 12 .500 6.500T8 1z" fill="#5d5c59" /><path d="M4 6.500h2M7 6.500h2M10 6.500h2" stroke="#eee" strokeWidth="1.800" /></svg>
      </StatusBar>
      <Annotation />
    </Window>
  );
}
